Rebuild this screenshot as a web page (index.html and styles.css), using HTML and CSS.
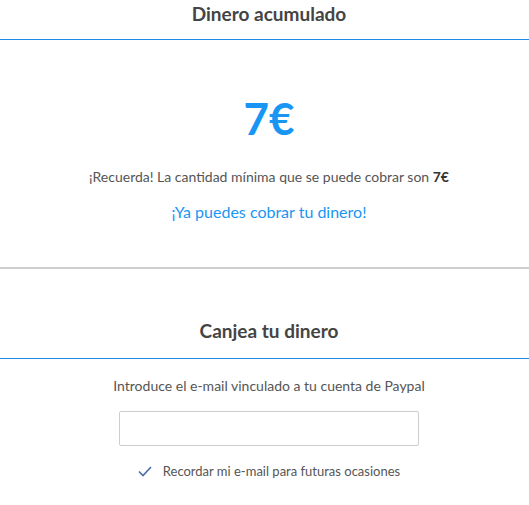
FILE: index.html
```html
<!DOCTYPE html>
<html lang="es">
<head>
<meta charset="utf-8">
<link rel="stylesheet" href="styles.css">
</head>
<body>
<section class="panel">
  <h2 class="panel-title">Dinero acumulado</h2>
  <div class="balance">
    <div class="amount">7€</div>
    <p class="note">¡Recuerda! La cantidad mínima que se puede cobrar son <strong>7€</strong></p>
    <a class="cash-link" href="#">¡Ya puedes cobrar tu dinero!</a>
  </div>
</section>
<section class="panel redeem">
  <h2 class="panel-title">Canjea tu dinero</h2>
  <div class="form">
    <p class="label">Introduce el e-mail vinculado a tu cuenta de Paypal</p>
    <input class="email" type="text">
    <label class="remember">
      <svg class="check" width="14" height="11" viewBox="0 0 14 11"><path d="M1 5.5 L5 9.5 L13 1" fill="none" stroke="#4a6ea8" stroke-width="1.6"/></svg>
      <span>Recordar mi e-mail para futuras ocasiones</span>
    </label>
  </div>
</section>
</body>
</html>
```
FILE: styles.css
```css
html, body {
  margin: 0;
  padding: 0;
  background: #fff;
}
body {
  font-family: "Lato", "Open Sans", sans-serif;
  color: #555;
}
.panel-title {
  margin: 0;
  text-align: center;
  font-size: 19px;
  font-weight: 700;
  color: #444;
  line-height: 28px;
  padding: 0 0 11px 9px;
  border-bottom: 1px solid #1e88e5;
}
.balance {
  display: flex;
  flex-direction: column;
  align-items: center;
  padding: 52px 0 45px 9px;
  border-bottom: 2px solid #cfcfcf;
}
.amount {
  font-size: 44px;
  font-weight: 700;
  color: #1996f3;
  line-height: 52px;
}
.note {
  margin: 24px 0 0;
  font-size: 14px;
  line-height: 18px;
  color: #555;
}
.note strong {
  color: #333;
}
.cash-link {
  margin-top: 16px;
  font-size: 16px;
  line-height: 20px;
  color: #1996f3;
  text-decoration: none;
}
.redeem .panel-title {
  padding-top: 48px;
  padding-bottom: 13px;
}
.form {
  display: flex;
  flex-direction: column;
  align-items: center;
  padding: 18px 0 0 9px;
}
.label {
  margin: 0;
  font-size: 14px;
  line-height: 18px;
  color: #555;
}
.email {
  box-sizing: border-box;
  width: 300px;
  height: 35px;
  margin-top: 16px;
  border: 1px solid #cdcdcd;
  border-radius: 2px;
  outline: none;
}
.remember {
  display: flex;
  align-items: center;
  gap: 11px;
  margin-top: 17px;
  font-size: 13px;
  color: #555;
}
.check {
  display: block;
}
```
